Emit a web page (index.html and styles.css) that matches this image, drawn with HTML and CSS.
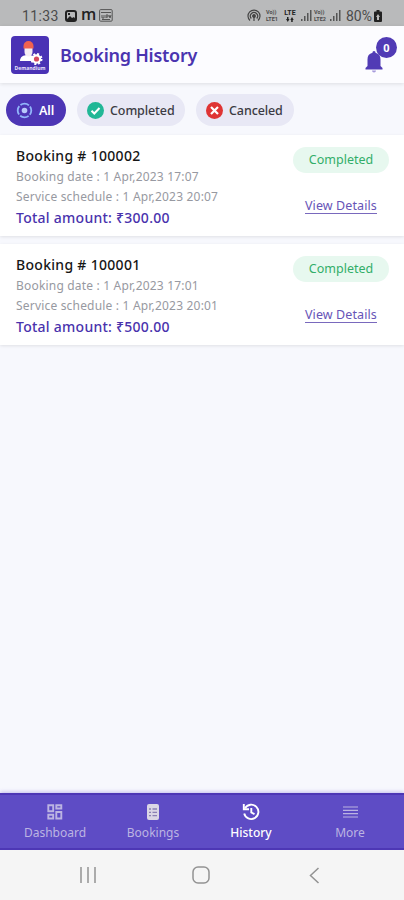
FILE: index.html
```html
<!DOCTYPE html>
<html lang="en">
<head>
<meta charset="utf-8">
<meta name="viewport" content="width=device-width, initial-scale=1">
<title>Booking History</title>
<link rel="stylesheet" href="styles.css">
</head>
<body>
<div class="status">
  <span class="clock">11:33</span>
  <svg class="gallery" width="12" height="12" viewBox="0 0 12 12"><rect x="1" y="1" width="10" height="10" rx="2" fill="none" stroke="#222" stroke-width="2"/><path d="M2 9l3-3 2 2 2-1 2 3H2z" fill="#222"/><rect x="3" y="3" width="2" height="2" fill="#222"/></svg>
  <span class="m">m</span>
  <svg width="14" height="13" viewBox="0 0 14 13" fill="none" stroke="#555"><rect x=".6" y=".6" width="12.6" height="11.6" rx="1"/><path d="M2 3.5h10M3 6v3h2V6M7 9V6h2v2H7M10 6l1 3 1-3M3 10.5h8"/></svg>
  <svg class="hotspot" width="14" height="13" viewBox="0 0 14 13" fill="none" stroke="#444" stroke-width="1.2"><path d="M3 11.500a6 6 0 1 1 8 0M4.300 9.500a3.600 3.600 0 1 1 5.400 0"/><circle cx="7" cy="7" r="1.300" fill="#444"/><path d="M7 8v4"/></svg>
  <span class="net"><i>Vo))</i><i>LTE1</i></span>
  <span class="net lte"><i>LTE</i><svg width="8" height="5" viewBox="0 0 8 5" fill="#222"><path d="M0 2h1V0h1.500v2h1L1.800 5zM4.300 3L6 0l1.700 3h-1v2H5.200V3z"/></svg></span>
  <svg class="bars" width="11" height="11" viewBox="0 0 11 11" fill="#555"><path d="M0 9h1.500v2H0zM3 6h1.500v5H3zM6 3h1.500v8H6zM9 0h1.500v11H9z"/></svg>
  <span class="net second"><i>Vo))</i><i>LTE2</i></span>
  <svg class="bars2" width="11" height="11" viewBox="0 0 11 11" fill="#555"><path d="M0 9h1.500v2H0zM3 6h1.500v5H3zM6 3h1.500v8H6zM9 0h1.500v11H9z"/></svg>
  <span class="percent">80%</span>
  <svg width="8" height="12" viewBox="0 0 8 12"><path d="M2.500 0h3v1.500H7a1 1 0 0 1 1 1V11a1 1 0 0 1-1 1H1a1 1 0 0 1-1-1V2.500a1 1 0 0 1 1-1h1.500z" fill="#222"/><path d="M4 4l2 3H5v3H3V7H2z" fill="#bbb"/></svg>
</div>
<header class="header">
  <svg class="logo" width="38" height="38" viewBox="0 0 38 38">
    <rect width="38" height="38" rx="4" fill="#4a32b5"/>
    <path d="M9 25c0-4 3-6 8-6s8 2 9 6z" fill="#fff"/>
    <path d="M13.500 12h8v4a4 4.500 0 0 1-8 0z" fill="#f5eef4"/>
    <path d="M12.500 12.500V10a5 5 0 0 1 10 0v2.500z" fill="#f2624f"/>
    <circle cx="25.500" cy="23" r="4.700" fill="#fff"/><circle cx="25.500" cy="23" r="5" fill="none" stroke="#fff" stroke-width="2" stroke-dasharray="2 1.930"/>
    <circle cx="25.500" cy="23" r="2.600" fill="#d5495f"/>
    <text x="3.500" y="34" textLength="31" lengthAdjust="spacingAndGlyphs">Demandium</text>
  </svg>
  <h1>Booking History</h1>
  <div class="bell">
    <svg width="18" height="22" viewBox="0 0 18 22"><path d="M9 0c1 0 1.500.8 1.500 1.800C14 2.600 15.500 5 15.500 8.500V15l2 2v1.500H.5V17l2-2V8.500C2.500 5 4 2.600 7.500 1.800 7.500.8 8 0 9 0z" fill="#513bb5"/><path d="M7 19.500h4a2 2 0 0 1-4 0z" fill="#a79bdc"/></svg>
    <span class="badge">0</span>
  </div>
</header>
<main>
  <div class="filters">
    <div class="chip active"><svg width="17" height="17" viewBox="0 0 17 17" fill="none"><circle cx="8.500" cy="8.500" r="6.800" stroke="#91b6fa" stroke-width="1.800" stroke-dasharray="9.100 1.580" stroke-dashoffset="4.500"/><circle cx="8.500" cy="8.500" r="2.800" fill="#b9cafb"/></svg><span>All</span></div>
    <div class="chip done"><svg width="17" height="17" viewBox="0 0 17 17"><circle cx="8.500" cy="8.500" r="8.500" fill="#21b796"/><path d="M4.500 8.700l2.800 2.800 5.200-5.500" fill="none" stroke="#fff" stroke-width="2"/></svg><span>Completed</span></div>
    <div class="chip cancel"><svg width="17" height="17" viewBox="0 0 17 17"><circle cx="8.500" cy="8.500" r="8.500" fill="#df3434"/><path d="M5 5l7 7M12 5l-7 7" stroke="#fff" stroke-width="2.200"/></svg><span>Canceled</span></div>
  </div>
  <article class="card">
    <div class="info">
      <h2>Booking # 100002</h2>
      <p class="date">Booking date : 1 Apr,2023 17:07</p>
      <p class="schedule">Service schedule : 1 Apr,2023 20:07</p>
      <p class="total">Total amount: ₹300.00</p>
    </div>
    <div class="side"><span class="state">Completed</span><a>View Details</a></div>
  </article>
  <article class="card">
    <div class="info">
      <h2>Booking # 100001</h2>
      <p class="date">Booking date : 1 Apr,2023 17:01</p>
      <p class="schedule">Service schedule : 1 Apr,2023 20:01</p>
      <p class="total">Total amount: ₹500.00</p>
    </div>
    <div class="side"><span class="state">Completed</span><a>View Details</a></div>
  </article>
</main>
<nav class="tabs">
  <div class="tab dash"><svg width="16" height="16" viewBox="0 0 16 16" fill="none" stroke="currentColor" stroke-width="1.900"><path d="M1.300 1.300h4.900v6H1.300zM9.300 1.300h5v3.200h-5zM9.300 8h5v6.500h-5zM1.300 10.800h4.900v3.700H1.300z"/></svg><span>Dashboard</span></div>
  <div class="tab book"><svg width="12" height="16" viewBox="0 0 12 16"><rect width="12" height="16" rx="2" fill="#dad6e5"/><path d="M2 5h2M5.500 5H10M2 8.300h2M5.500 8.300H10M2 11.600h2M5.500 11.600H10" stroke="#8a80b4" stroke-width="1.300"/></svg><span>Bookings</span></div>
  <div class="tab current"><svg width="18" height="18" viewBox="0 0 18 18" fill="none" stroke="#fff" stroke-width="1.900"><path d="M3 5.200a7.200 7.200 0 1 1-.8 5.300"/><path d="M1.800 1v5.200H7M9.300 5v4.500l3.200 1.700"/></svg><span>History</span></div>
  <div class="tab more"><svg width="15" height="12" viewBox="0 0 15 12"><path d="M0 1h15M0 4.300h15M0 7.700h15M0 11h15" stroke="currentColor" stroke-width="1.200"/></svg><span>More</span></div>
</nav>
<div class="system">
  <svg width="16" height="16" viewBox="0 0 16 16" stroke="#929292" stroke-width="1.500"><path d="M1 0v16M8 0v16M15 0v16"/></svg>
  <svg class="home" width="18" height="18" viewBox="0 0 18 18" fill="none" stroke="#929292" stroke-width="1.500"><rect x="1" y="1" width="16" height="16" rx="5"/></svg>
  <svg class="back" width="11" height="17" viewBox="0 0 11 17" fill="none" stroke="#929292" stroke-width="1.500"><path d="M9.500 1L1.500 8.500l8 7.500"/></svg>
</div>
</body>
</html>
```
FILE: styles.css
```css
* { box-sizing: border-box; }
body { margin: 0; width: 404px; height: 900px; display: flex; flex-direction: column; overflow: hidden; background: #f7f8fd; font-family: "Noto Sans", sans-serif; }
h1, h2, p { margin: 0; white-space: nowrap; }
svg { display: block; flex: none; }
.status { height: 26px; flex: none; display: flex; align-items: center; padding: 5px 0 0 22px; background: #b9babb; color: #4b4b4b; font-family: Roboto, sans-serif; font-size: 14px; }
.clock { width: 43px; letter-spacing: .35px; }
.m { width: 22px; padding-left: 4px; color: #222; font: 600 16px/16px "Open Sans", sans-serif; transform: translateY(-2px); }
.hotspot { margin-left: 134px; }
.net { width: 17px; margin-left: 5px; display: flex; flex-direction: column; font: 700 5.500px/7px Roboto, sans-serif; }
.net i { font-style: normal; white-space: nowrap; }
.lte { width: 14px; margin-left: 0; align-items: center; color: #222; font-size: 7px; }
.bars { margin-left: 4px; }
.second { width: 15px; margin-left: 2px; }
.bars2 { margin-left: 1px; }
.percent { width: 28px; margin-left: 5px; }
.header { height: 57px; flex: none; display: flex; align-items: center; padding: 0 7px 0 11px; background: #fcfcff; box-shadow: 0 1px 4px #0000001c; z-index: 1; }
.logo { overflow: visible; }
.logo text { font: 700 6px "Open Sans", sans-serif; fill: #e8e2fa; }
h1 { margin-left: 11px; color: #4a34b0; font-size: 18px; line-height: 24px; font-weight: 600; letter-spacing: -.25px; }
.bell { position: relative; width: 32px; height: 36px; margin-left: auto; display: flex; align-items: flex-end; }
.badge { position: absolute; top: 0; right: 0; width: 21px; height: 21px; border-radius: 50%; background: #513bb5; color: #fff; text-align: center; font-size: 11px; line-height: 21px; font-weight: 700; }
main { flex: 1; }
.filters { height: 52px; display: flex; padding: 11px 6px 0; gap: 11px; }
.chip { height: 32px; border-radius: 16px; display: flex; align-items: center; gap: 6px; padding-left: 10px; background: #e8e8f5; color: #3b3b43; font-size: 12.500px; font-weight: 500; letter-spacing: -.1px; white-space: nowrap; }
.active { width: 60px; background: #4d36b5; color: #fff; font-weight: 600; }
.done { width: 108px; }
.cancel { width: 98px; }
.card { height: 101px; margin-bottom: 8px; padding: 11px 15px 0 16px; display: flex; justify-content: space-between; background: #fff; box-shadow: 0 1px 3px #00000018; }
.info { display: flex; flex-direction: column; }
h2 { height: 21px; color: #161616; font-size: 14px; line-height: 20px; font-weight: 500; letter-spacing: .3px; }
.date, .schedule { height: 20px; color: #9799a1; font-size: 12px; line-height: 20px; letter-spacing: .19px; }
.total { height: 22px; color: #4932ad; font-size: 14px; line-height: 22px; font-weight: 500; letter-spacing: .26px; }
.side { width: 96px; display: flex; flex-direction: column; align-items: center; }
.state { width: 96px; height: 26px; margin-top: 1px; border-radius: 13px; background: #e7f8ef; color: #32ae69; text-align: center; font-size: 12.500px; line-height: 26px; }
.side a { margin-top: 25px; color: #6754b7; border-bottom: 1px solid #7969bd; font-size: 12.500px; line-height: 15px; letter-spacing: .1px; white-space: nowrap; }
.tabs { height: 57px; flex: none; display: grid; grid-template-columns: 104px 98px 98px 104px; background: #5e4cc5; border-top: 2px solid #4d37b5; border-bottom: 2px solid #4d37b5; box-shadow: 0 -1px 4px #5843c855; }
.tab { display: grid; grid-template-rows: 33px 20px; justify-items: center; align-items: center; color: #bcb4e2; font-size: 12px; line-height: 16px; }
.tab span { transform: translateY(-5px); }
.dash { padding-left: 6px; }
.more { padding-right: 4px; }
.current { color: #fff; font-weight: 500; }
.system { height: 50px; flex: none; display: flex; align-items: center; padding: 0 80px; background: #f5f5f5; }
.home { margin-left: 96px; }
.back { margin-left: 99px; }
```
